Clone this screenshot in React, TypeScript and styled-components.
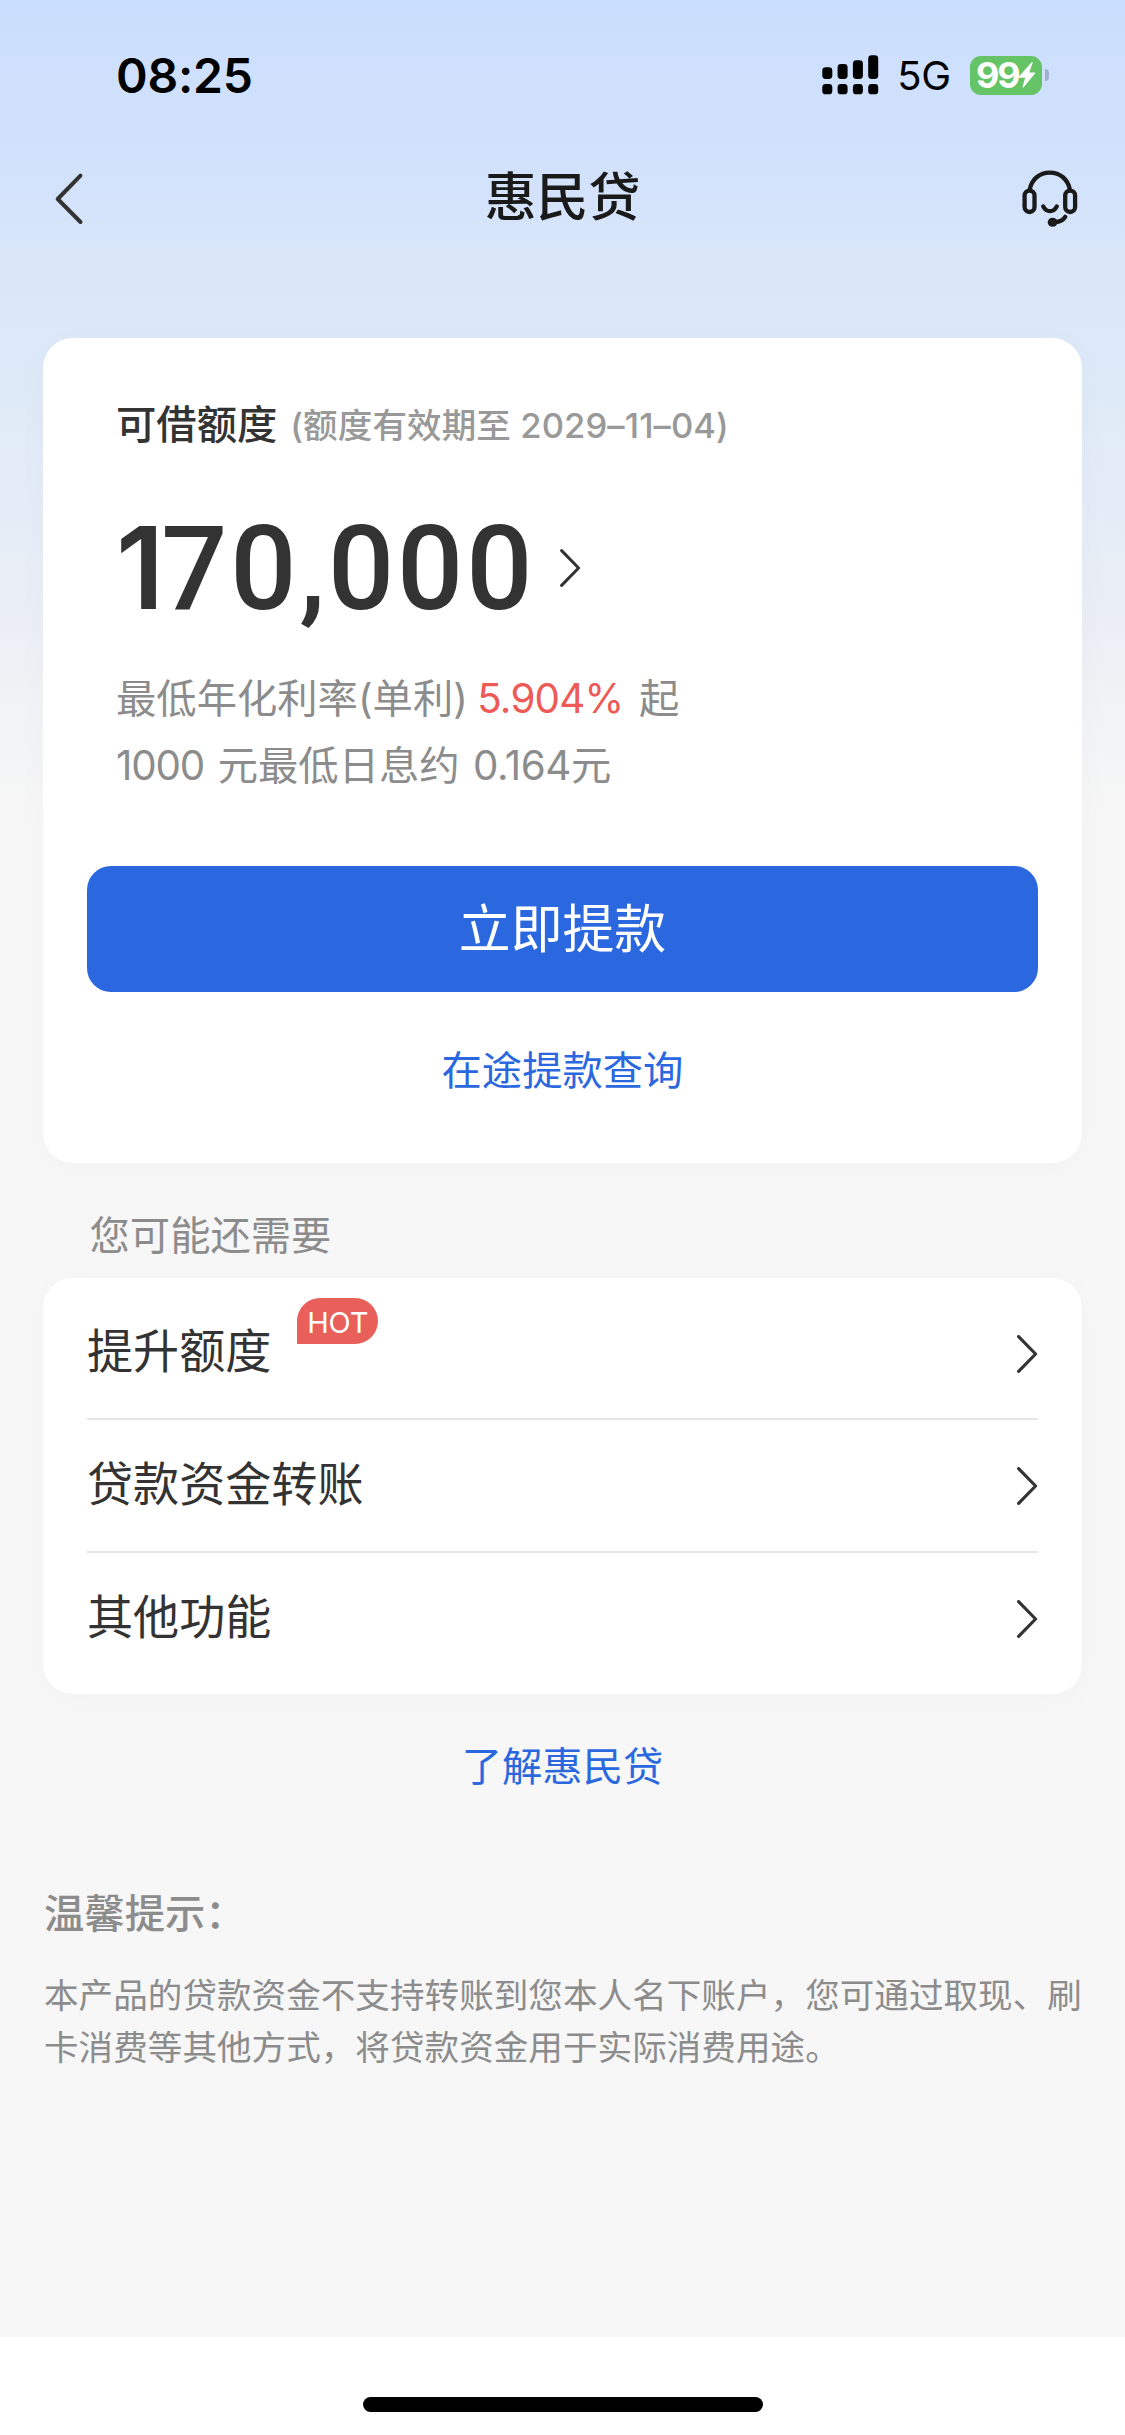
import React from 'react';
import styled, { createGlobalStyle } from 'styled-components';

const GlobalStyle = createGlobalStyle`
  *, *::before, *::after { box-sizing: border-box; }
  body { margin: 0; background: #f7f7f7; }
  button { border: 0; padding: 0; background: none; font: inherit; color: inherit; cursor: pointer; }
  h1, h2, p, ul { margin: 0; padding: 0; font-weight: inherit; font-size: inherit; }
  ul { list-style: none; }
`;

const Screen = styled.div`
  width: 1125px;
  height: 2435px;
  display: flex;
  flex-direction: column;
  overflow: hidden;
  font-family: Inter, 'Noto Sans CJK SC', sans-serif;
  color: #333;
  background: linear-gradient(
    180deg,
    #cadefd 0px,
    #d4e3fb 200px,
    #d9e7f7 270px,
    #dde9f8 360px,
    #e5ecf7 500px,
    #eaeef5 610px,
    #f2f3f5 720px,
    #f7f7f7 825px
  );
`;

const StatusBar = styled.header`
  height: 150px;
  padding: 0 76px 0 116px;
  display: flex;
  justify-content: space-between;
  align-items: center;
  color: #000;
`;

const Time = styled.time`
  font-size: 48px;
  font-weight: 600;
  letter-spacing: -0.2px;
`;

const StatusIcons = styled.div`
  display: flex;
  align-items: center;
`;

const Network = styled.span`
  margin: 1px 19px 0 18px;
  font-size: 40px;
  letter-spacing: -0.2px;
`;

const Battery = styled.div`
  width: 72px;
  height: 39px;
  padding-left: 6px;
  display: flex;
  align-items: center;
  border-radius: 11px;
  background: #65c466;
  color: #fff;
  font-size: 36px;
  font-weight: 700;
  letter-spacing: -2.2px;
`;

const BatteryTip = styled.i`
  width: 4px;
  height: 12px;
  margin-left: 3px;
  border-radius: 0 4px 4px 0;
  background: #a2b1cb;
`;

const NavBar = styled.nav`
  height: 188px;
  padding: 20px 47px 0 54px;
  display: grid;
  grid-template-columns: 53px 1fr 60px;
  align-items: start;
`;

const NavTitle = styled.h1`
  padding-top: 2px;
  font-size: 51.84px;
  font-weight: 500;
  line-height: 52px;
  text-align: center;
  color: #1a1a1a;
`;

const NavButton = styled.button<{ $end?: boolean }>`
  height: 60px;
  display: flex;
  justify-content: ${({ $end }) => ($end ? 'flex-end' : 'flex-start')};
`;

const Card = styled.section`
  margin: 0 43px;
  border-radius: 30px;
  background: #fff;
  box-shadow: 0 6px 36px rgba(0, 0, 0, 0.025);
`;

const QuotaCard = styled(Card)`
  height: 825px;
  padding: 58px 44px 0;
  display: flex;
  flex-direction: column;
`;

const QuotaInfo = styled.div`
  height: 470px;
  padding-left: 29px;
`;

const QuotaHeading = styled.h2`
  display: flex;
  align-items: center;
  height: 50px;
  font-size: 40.32px;
  font-weight: 500;
  white-space: pre;
`;

const Validity = styled.span`
  margin-left: 13px;
  padding-top: 4px;
  font-size: 34.56px;
  letter-spacing: 0.1px;
  color: #999;
`;

const Amount = styled.button`
  height: 120px;
  margin-top: 62px;
  display: flex;
  align-items: center;
  gap: 24px;
`;

const AmountValue = styled.span`
  display: block;
  width: 420px;
  text-align: left;
  white-space: nowrap;
  font-family: Roboto, sans-serif;
  font-size: 116.5px;
  font-weight: 500;
  line-height: 120px;
  letter-spacing: 2.8px;

  &::first-letter {
    font-family: Inter, sans-serif;
    font-size: 114px;
    font-weight: 600;
    letter-spacing: -3px;
  }
`;

const Rate = styled.p`
  margin-top: 37px;
  font-size: 40.32px;
  line-height: 67px;
  white-space: pre;
  color: #8c8c8c;

  & + & { margin-top: 0; }
`;

const RateValue = styled.em`
  margin: 0 4.5px 0 -2px;
  font-style: normal;
  letter-spacing: -0.8px;
  color: #ee5a55;
`;

const Figure = styled.span<{ $tracking: number; $before?: number; $after?: number }>`
  margin-left: ${({ $before = 0 }) => $before}px;
  margin-right: ${({ $after = 0 }) => $after}px;
  letter-spacing: ${({ $tracking }) => $tracking}px;
`;

const PrimaryButton = styled.button`
  height: 126px;
  border-radius: 24px;
  background: #2b68e0;
  color: #fff;
  font-size: 51.84px;
  line-height: 128px;
`;

const TextLink = styled.button<{ $top: number }>`
  margin-top: ${({ $top }) => $top}px;
  align-self: center;
  font-size: 40.32px;
  line-height: 60px;
  color: #2b68e0;
`;

const SectionLabel = styled.h2`
  height: 115px;
  padding: 43px 0 0 89.5px;
  font-size: 40.32px;
  line-height: 60px;
  color: #8c8c8c;
`;

const MenuCard = styled(Card)`
  height: 416px;
  padding: 7px 44px 0;
`;

const MenuRow = styled.li`
  height: 132.5px;
  display: flex;
  align-items: center;
  font-size: 46.08px;

  &:first-child { height: 133px; padding-top: 2px; }
  & + & { border-top: 2px solid #e6e6e6; }
`;

const MenuLabel = styled.span`
  padding-bottom: 8.5px;
`;

const MenuArrow = styled.span`
  margin-left: auto;
  padding-top: 2px;
  display: flex;
`;

const HotBadge = styled.span`
  width: 81px;
  height: 46px;
  margin: 0 0 64px 26px;
  border-radius: 23px 23px 23px 0;
  background: #e9605b;
  color: #fff;
  font-size: 29px;
  line-height: 49px;
  letter-spacing: -0.1px;
  text-align: center;
`;

const Notice = styled.section`
  margin: 87px 0 0;
  padding: 0 0 0 44px;
  flex: 1;
  color: #8c8c8c;
`;

const NoticeTitle = styled.h2`
  font-size: 40.32px;
  font-weight: 500;
  line-height: 60px;
`;

const NoticeBody = styled.p`
  width: 1042px;
  margin-top: 26px;
  font-size: 34.56px;
  letter-spacing: 0.05px;
  line-height: 52.4px;
`;

const HomeArea = styled.footer`
  height: 98px;
  padding-top: 60px;
  background: #fff;
`;

const HomeIndicator = styled.div`
  width: 400px;
  height: 15px;
  margin: 0 auto;
  border-radius: 8px;
  background: #000;
`;

const SignalIcon = () => (
  <svg width="57" height="40" viewBox="0 0 57 40">
    {[12.3, 9, 5.3, 0.3].map((top, i) => (
      <g key={top}>
        <rect x={0.3 + i * 15.3} y={top} width="10" height={24 - top} rx="3.4" />
        <rect x={0.3 + i * 15.3} y="29" width="10" height="10.3" rx="3.4" />
      </g>
    ))}
  </svg>
);

const BoltIcon = () => (
  <svg width="18" height="28" viewBox="0 0 18 28">
    <path
      d="M13.6 1.2 1 15.6c-.5.7-.2 1.2.5 1.2h5.7L4.6 25.6c-.3 1 .5 1.3 1.1.6L17 12.6c.5-.7.2-1.2-.5-1.2h-5.3l3.4-9.5c.3-1-.4-1.3-1-.7Z"
      fill="#fff"
    />
  </svg>
);

const BackIcon = () => (
  <svg width="30" height="56" viewBox="0 0 30 56" fill="none" stroke="#333" strokeWidth="4" strokeLinecap="round" strokeLinejoin="round">
    <path d="M26.5 5.6 3.7 29 26.5 52" />
  </svg>
);

const ChevronIcon = ({ stroke = 3 }: { stroke?: number }) => (
  <svg width="21" height="38" viewBox="0 0 21 38" fill="none" stroke="#333" strokeWidth={stroke} strokeLinecap="round" strokeLinejoin="round">
    <path d="M1.6 1.6 18.6 19 1.6 36.4" />
  </svg>
);

const HeadsetIcon = () => (
  <svg width="56" height="58" viewBox="0 0 56 58" fill="none" stroke="#1a1a1a" strokeWidth="4.3" strokeLinecap="round">
    <rect x="2.6" y="20.6" width="9.9" height="21.4" rx="4.9" />
    <rect x="43.2" y="20.6" width="9.9" height="21.4" rx="4.9" />
    <path d="M7.8 19.4C9.6 9.4 17.5 2.6 27.8 2.6S46 9.4 47.8 19.4" />
    <path d="M21.2 36.4c3.2 6.4 10.4 6.4 13.6 0" />
    <path d="M43.2 46.8c-2 3.2-5.6 5-10 5.2" />
    <ellipse cx="30.6" cy="52.3" rx="4.9" ry="4.5" fill="#1a1a1a" stroke="none" />
  </svg>
);

const menuItems = [
  { label: '提升额度', badge: 'HOT' },
  { label: '贷款资金转账' },
  { label: '其他功能' },
];

export default function App() {
  return (
    <>
      <GlobalStyle />
      <Screen>
        <StatusBar>
          <Time>08:25</Time>
          <StatusIcons>
            <SignalIcon />
            <Network>5G</Network>
            <Battery>
              99
              <BoltIcon />
            </Battery>
            <BatteryTip />
          </StatusIcons>
        </StatusBar>

        <NavBar>
          <NavButton aria-label="返回">
            <BackIcon />
          </NavButton>
          <NavTitle>惠民贷</NavTitle>
          <NavButton $end aria-label="客服">
            <HeadsetIcon />
          </NavButton>
        </NavBar>

        <QuotaCard>
          <QuotaInfo>
            <QuotaHeading>
              可借额度
              <Validity>(额度有效期至 2029–11–04)</Validity>
            </QuotaHeading>
            <Amount>
              <AmountValue>170,000</AmountValue>
              <ChevronIcon />
            </Amount>
            <Rate>
              最低年化利率(单利) <RateValue>5.904%</RateValue> 起
            </Rate>
            <Rate>
              <Figure $tracking={-1.2} $after={2.5}>1000</Figure> 元最低日息约{' '}
              <Figure $tracking={-0.4} $before={2}>0.164</Figure>元
            </Rate>
          </QuotaInfo>
          <PrimaryButton>立即提款</PrimaryButton>
          <TextLink $top={49}>在途提款查询</TextLink>
        </QuotaCard>

        <SectionLabel>您可能还需要</SectionLabel>

        <MenuCard>
          <ul>
            {menuItems.map(({ label, badge }) => (
              <MenuRow key={label}>
                <MenuLabel>{label}</MenuLabel>
                {badge && <HotBadge>{badge}</HotBadge>}
                <MenuArrow>
                  <ChevronIcon stroke={3.2} />
                </MenuArrow>
              </MenuRow>
            ))}
          </ul>
        </MenuCard>

        <TextLink $top={42.5}>了解惠民贷</TextLink>

        <Notice>
          <NoticeTitle>温馨提示：</NoticeTitle>
          <NoticeBody>
            本产品的贷款资金不支持转账到您本人名下账户，您可通过取现、刷卡消费等其他方式，将贷款资金用于实际消费用途。
          </NoticeBody>
        </Notice>

        <HomeArea>
          <HomeIndicator />
        </HomeArea>
      </Screen>
    </>
  );
}
